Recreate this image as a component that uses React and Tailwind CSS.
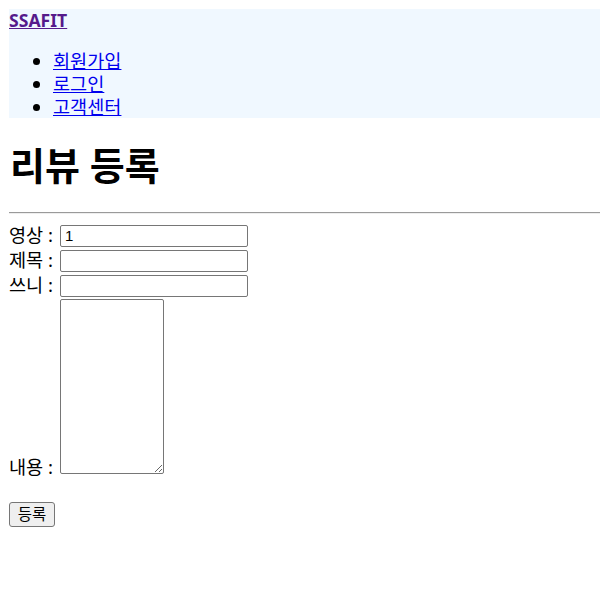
import { useState } from 'react';

const navLinks = ['회원가입', '로그인', '고객센터'];

const fields = [
    { label: '영상', value: '1' },
    { label: '제목', value: '' },
    { label: '쓰니', value: '' },
];

export default function App() {
    const [content, setContent] = useState('');

    return (
        <div
            className="min-h-screen bg-white pl-[9px] pt-[9px] text-[18.6px] text-black"
            style={{ fontFamily: '"Noto Sans", "Noto Sans CJK KR", sans-serif' }}
        >
            {/* Header */}
            <header className="bg-[#f0f8ff]">
                <a href="#" className="block w-fit text-[17.6px] font-bold leading-[23px] text-[#551a8b] underline">
                    SSAFIT
                </a>
                <ul className="mt-[17px] list-disc pl-[44px]">
                    {navLinks.map((label) => (
                        <li key={label} className="leading-[23px]">
                            <a href="#" className="text-[#0000ee] underline">
                                {label}
                            </a>
                        </li>
                    ))}
                </ul>
            </header>

            <h1 className="mt-[23.6px] pl-[1px] text-[38px] font-bold leading-[47px]">리뷰 등록</h1>
            <hr className="mt-[23.4px] mb-[9px] h-[2px] border-0 border-t border-b border-t-[#9a9a9a] border-b-[#eeeeee]" />

            {/* Form */}
            <form onSubmit={(e) => e.preventDefault()}>
                {fields.map((f) => (
                    <div key={f.label} className="flex h-[25px] items-end">
                        <span className="w-[51px] pb-[2px] leading-[23px]">{f.label} :</span>
                        <input
                            type="text"
                            defaultValue={f.value}
                            className="mb-[1px] h-[22px] w-[188px] rounded-[2px] border border-[#767676] px-[4px] text-[15px]"
                            style={{ fontFamily: '"Liberation Sans", Arial, sans-serif' }}
                        />
                    </div>
                ))}
                <div className="flex items-end">
                    <span className="w-[51px] leading-[23px]">내용 :</span>
                    <textarea
                        value={content}
                        onChange={(e) => setContent(e.target.value)}
                        className="mt-[1px] mb-[4px] h-[175px] w-[104px] rounded-[2px] border border-[#767676]"
                    />
                </div>
                <button
                    type="submit"
                    className="mt-[24px] h-[25px] w-[46px] rounded-[3px] border border-[#767676] bg-[#efefef] text-[15.5px] leading-none"
                >
                    등록
                </button>
            </form>
        </div>
    );
}
